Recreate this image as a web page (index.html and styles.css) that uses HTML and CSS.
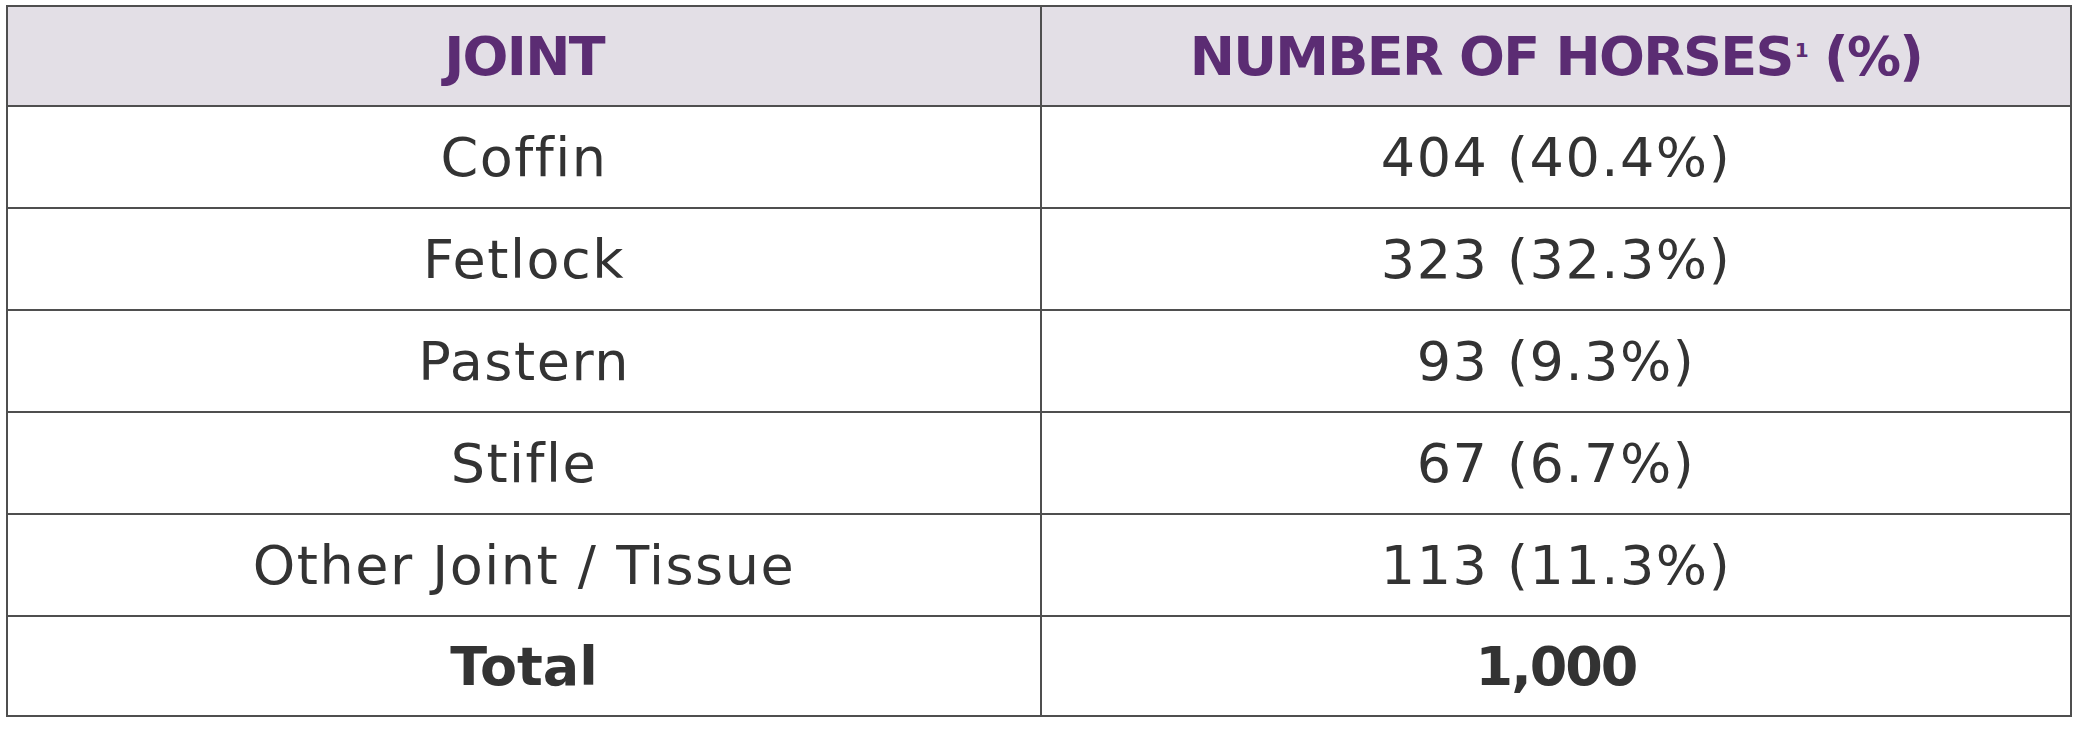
FILE: index.html
```html
<!DOCTYPE html>
<html>
<head>
<meta charset="utf-8">
<link rel="stylesheet" href="styles.css">
</head>
<body>
<table class="data">
  <thead>
    <tr class="head-row">
      <th class="col-joint">JOINT</th>
      <th class="col-num">NUMBER OF HORSES<sup class="ref">1</sup> (%)</th>
    </tr>
  </thead>
  <tbody>
    <tr class="row"><td>Coffin</td><td>404 (40.4%)</td></tr>
    <tr class="row"><td>Fetlock</td><td>323 (32.3%)</td></tr>
    <tr class="row"><td>Pastern</td><td>93 (9.3%)</td></tr>
    <tr class="row"><td>Stifle</td><td>67 (6.7%)</td></tr>
    <tr class="row"><td>Other Joint / Tissue</td><td>113 (11.3%)</td></tr>
    <tr class="row total"><td>Total</td><td class="total-num">1,000</td></tr>
  </tbody>
</table>
</body>
</html>
```
FILE: styles.css
```css
html, body {
  margin: 0;
  padding: 0;
  background: #ffffff;
}
body {
  padding: 5px 0 0 6px;
  font-family: "DejaVu Sans", "Liberation Sans", sans-serif;
}
.data {
  border-collapse: collapse;
  width: 2066px;
  table-layout: fixed;
}
.data th, .data td {
  border: 2px solid #4f4f4f;
  text-align: center;
  vertical-align: middle;
  padding: 0;
}
.col-joint { width: 1032px; }
.head-row {
  height: 100px;
  background: #e3dfe6;
}
.head-row th {
  color: #5b2c73;
  font-weight: 700;
  font-size: 54px;
  letter-spacing: -1.7px;
}
.ref {
  font-size: 20px;
  font-weight: 700;
  line-height: 0;
  vertical-align: 18px;
  margin-left: 2px;
}
.row {
  height: 102px;
}
.row td {
  color: #333333;
  font-size: 54px;
  font-weight: 400;
  letter-spacing: 1.5px;
}
.total td {
  font-weight: 700;
  letter-spacing: 0;
}
.total td.total-num {
  letter-spacing: -2px;
}
.total { height: 100px; }
```
